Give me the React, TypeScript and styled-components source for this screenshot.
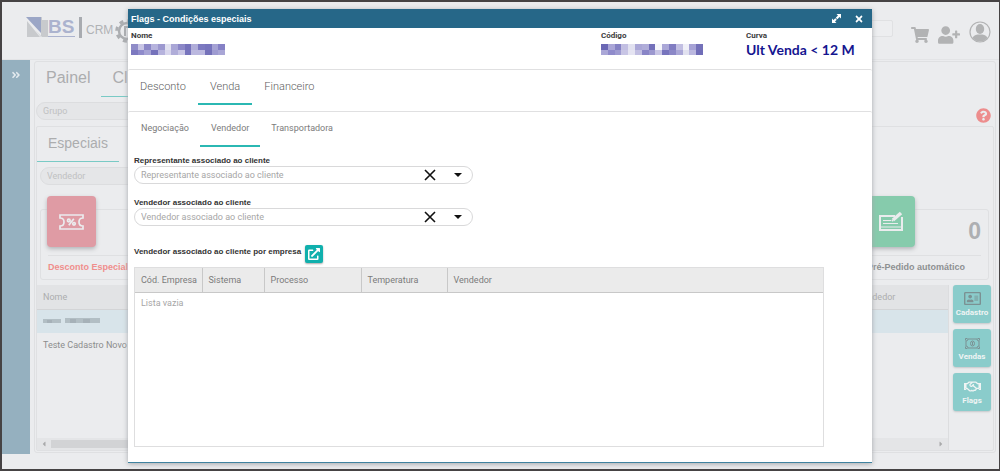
import React, { useState } from 'react';
import styled, { createGlobalStyle } from 'styled-components';
import { FaShoppingCart, FaUserPlus, FaRegAddressCard, FaQuestionCircle, FaRegHandshake } from 'react-icons/fa';
import { FaAngleDoubleRight, FaTimes, FaCaretLeft, FaCaretRight, FaExternalLinkAlt } from 'react-icons/fa';

const arial = '"Liberation Sans", Arial, sans-serif';

const Global = createGlobalStyle`
  * { box-sizing: border-box; }
  html, body, #root { height: 100%; }
  body { margin: 0; background: #ebecee; font-family: Roboto, "Liberation Sans", Arial, sans-serif; font-size: 9px; color: #8b8c8d; overflow: hidden; }
  button, input { font: inherit; color: inherit; margin: 0; }
  button { border: 0; background: none; padding: 0; cursor: pointer; }
  h1, h2, p, dl, dd { margin: 0; font-weight: inherit; }
`;

const Frame = styled.div`
  position: relative;
  height: 100%;
  min-height: 471px;
  display: flex;
  flex-direction: column;
  border: 2px solid #464344;
  border-right-width: 1px;
  overflow: hidden;
`;

const TopBar = styled.header`
  height: 58px;
  flex: none;
  display: flex;
  align-items: center;
  justify-content: space-between;
  padding: 2px 8px 0 24px;
  border-bottom: 1px solid #e3e4e6;
`;
const TopActions = styled.div`
  display: flex;
  align-items: center;
  gap: 9px;
  color: #b2b3b4;
`;
const TopButton = styled.button<{ $low?: boolean }>`
  display: flex;
  padding-top: ${p => (p.$low ? 6 : 0)}px;
`;
const SearchBox = styled.input`
  width: 120px;
  height: 17px;
  margin: 0 9px 6px 0;
  border: 1px solid #e0e1e3;
  border-radius: 2px;
  background: #edeef0;
`;

const Body = styled.div`
  flex: 1;
  min-height: 0;
  display: flex;
  padding-bottom: 15px;
`;
const SideRail = styled.nav`
  width: 28px;
  flex: none;
  display: flex;
  justify-content: center;
  align-items: flex-start;
  padding-top: 10px;
  background: #95b0bf;
  color: #e4ebef;
`;
const Workspace = styled.main`
  flex: 1;
  min-width: 0;
  display: flex;
  flex-direction: column;
  margin: 1px 3px 1px 4px;
  border: 1px solid #dfe0e2;
  border-radius: 3px;
`;
const PageTabs = styled.div`
  display: flex;
  flex: none;
  height: 35px;
`;
const PageTab = styled.button<{ $active?: boolean; $small?: boolean }>`
  padding: 0 11px 2px;
  font-family: ${arial};
  font-size: ${p => (p.$small ? 14 : 16)}px;
  color: #acadae;
  border-bottom: 1px solid ${p => (p.$active ? '#79cac5' : 'transparent')};
`;
const PillInput = styled.input`
  height: 18px;
  padding: 0 6px;
  border: 1px solid #dcdddf;
  border-radius: 9px;
  background: #e5e6e8;
  &::placeholder { color: #c0c1c2; opacity: 1; }
`;
const FilterRow = styled.div`
  display: flex;
  flex: none;
  justify-content: space-between;
  align-items: flex-start;
  height: 29px;
  padding: 5px 4px 0 1px;
`;
const HelpButton = styled.button`
  display: flex;
  margin-top: 6px;
  color: #ed8d8d;
`;
const SubPanel = styled.section`
  flex: 1;
  min-height: 0;
  display: flex;
  flex-direction: column;
  margin: 0 1px 1px;
  border: 1px solid #dfe0e2;
  border-radius: 2px;
`;
const SubFilter = styled.div`
  padding: 5px 0 0 3px;
`;
const Cards = styled.div`
  display: flex;
  justify-content: space-between;
  flex: none;
  padding: 24px 4px 0 3px;
`;
const Card = styled.article<{ $wide?: boolean }>`
  width: ${p => (p.$wide ? 178 : 130)}px;
  height: 71px;
  display: flex;
  flex-direction: column;
  border: 1px solid #dfe0e2;
  border-radius: 3px;
  padding: 0 7px;
`;
const CardTop = styled.div`
  height: 46px;
  flex: none;
  display: flex;
  justify-content: space-between;
  border-bottom: 1px solid #dfe0e2;
  strong { font-family: ${arial}; font-size: 23px; line-height: 42px; color: #adafb2; }
`;
const CardIcon = styled.div<{ $color: string }>`
  width: 49px;
  height: 51px;
  margin: -14px 0 0 -1px;
  display: flex;
  align-items: center;
  justify-content: center;
  border-radius: 4px;
  background: ${p => p.$color};
  color: #ebecee;
  box-shadow: 0 2px 4px #b3b5b8;
`;
const CardName = styled.p<{ $alert?: boolean }>`
  font-family: ${arial};
  font-weight: bold;
  line-height: 22px;
  white-space: nowrap;
  color: ${p => (p.$alert ? '#f08e8c' : '#8e9092')};
`;
const ListArea = styled.div`
  flex: 1;
  min-height: 0;
  display: flex;
  gap: 4px;
  margin-top: 5px;
  padding-right: 2px;
`;
const ClientList = styled.div`
  flex: 1;
  min-width: 0;
  display: flex;
  flex-direction: column;
  justify-content: space-between;
  border-right: 1px solid #dcdddf;
`;
const ClientTable = styled.table`
  width: 100%;
  border-collapse: collapse;
  table-layout: fixed;
  th { height: 24px; padding: 0 6px; background: #e2e3e5; color: #acadae; font-weight: normal; text-align: left; border-bottom: 1px solid #d3d4d6; }
  th:last-child { width: 97px; }
  td { height: 24px; padding: 0 6px; }
`;
const ClientRow = styled.tr<{ $selected?: boolean }>`
  background: ${p => (p.$selected ? '#d8e4ea' : 'transparent')};
`;
const ScrollTrack = styled.div`
  display: flex;
  align-items: center;
  justify-content: space-between;
  height: 12px;
  padding: 0 3px;
  background: #e4e5e7;
  color: #a9aaab;
  span { width: 70%; height: 8px; margin: 0 auto 0 3px; background: #d2d3d5; }
`;
const Shortcuts = styled.div`
  width: 38px;
  display: flex;
  flex-direction: column;
  gap: 6px;
`;
const Shortcut = styled.button`
  height: 38px;
  flex: none;
  display: flex;
  flex-direction: column;
  align-items: center;
  justify-content: flex-end;
  gap: 1px;
  padding-bottom: 5px;
  border-radius: 3px;
  background: #8acccb;
  box-shadow: 0 1px 2px #c4c7c9;
  color: #eff4f4;
  font-size: 8px;
  line-height: 10px;
  font-weight: bold;
`;

const Dialog = styled.div`
  position: absolute;
  z-index: 2;
  top: 7px;
  bottom: 6px;
  left: 126px;
  right: 127px;
  display: flex;
  flex-direction: column;
  background: #fff;
  border-bottom: 1px solid #3f83a0;
  box-shadow: 0 1px 5px #a5a7aa;
`;
const DialogBar = styled.header`
  height: 19px;
  flex: none;
  display: flex;
  align-items: center;
  justify-content: space-between;
  padding: 0 8px 0 3px;
  background: #266788;
  color: #fff;
  h1 { font-family: ${arial}; font-size: 9px; font-weight: bold; }
  div { display: flex; gap: 13px; }
  button { display: flex; }
`;
const Summary = styled.dl`
  flex: none;
  display: grid;
  grid-template-columns: 470fr 145fr 126fr;
  height: 41px;
  padding: 3px 0 0 3px;
  dt { font-size: 8px; line-height: 10px; font-weight: bold; color: #3c3c3c; }
  dd { color: #151590; font-family: Lato, sans-serif; font-weight: bold; font-size: 14px; line-height: 18px; white-space: nowrap; }
`;
const Redacted = styled.svg`
  display: block;
  margin-top: 3px;
`;
const DialogTabs = styled.div<{ $nested?: boolean }>`
  flex: none;
  display: flex;
  height: ${p => (p.$nested ? 36 : 42)}px;
  padding: ${p => (p.$nested ? '0 0 0 2px' : '0 0 6px')};
  border-top: 1px solid #e0e0e1;
  border-radius: 2px;
`;
const DialogTab = styled.button<{ $active?: boolean; $nested?: boolean }>`
  padding: 0 ${p => (p.$nested ? '11px 2px' : '12px')};
  font-weight: ${p => (p.$nested ? 400 : 300)};
  font-size: ${p => (p.$nested ? 9 : 11)}px;
  color: ${p => (p.$nested ? '#7c7c7c' : '#606060')};
  border-bottom: 2px solid ${p => (p.$active ? '#2bb8b3' : 'transparent')};
`;
const Form = styled.div`
  flex: 1;
  display: flex;
  flex-direction: column;
  padding: 9px 48px 15px 6px;
`;
const Field = styled.div`
  margin-bottom: 14px;
  label { display: block; font-family: ${arial}; font-size: 8px; line-height: 10px; font-weight: bold; color: #333; }
`;
const Combo = styled.div`
  display: flex;
  align-items: center;
  width: 339px;
  height: 18px;
  padding: 0 9px 0 6px;
  border: 1px solid #d9d9da;
  border-radius: 9px;
  color: #111;
  input { flex: 1; min-width: 0; border: 0; outline: 0; padding: 0; background: none; }
  input::placeholder { color: #a6a6a6; opacity: 1; }
  button { display: flex; margin-left: 17px; }
`;
const TableHeading = styled.div`
  display: flex;
  align-items: center;
  gap: 4px;
  height: 19px;
  margin: 4px 0 4px;
  h2 { font-family: ${arial}; font-size: 8px; line-height: 10px; margin-bottom: 4px; font-weight: bold; color: #333; }
`;
const OpenButton = styled.button`
  width: 18px;
  height: 18px;
  display: flex;
  align-items: center;
  justify-content: center;
  border-radius: 2px;
  background: #10b0ad;
  color: #fff;
  box-shadow: 0 1px 2px #aaa;
`;
const TableBox = styled.div`
  flex: 1;
  border: 1px solid #dededf;
`;
const SellerTable = styled.table`
  width: 100%;
  border-collapse: collapse;
  table-layout: fixed;
  th { height: 24px; padding: 0 4px 0 6px; background: #ebebeb; color: #7b7b7b; font-weight: normal; text-align: left; white-space: nowrap; border-bottom: 1px solid #c8c8c8; border-right: 1px solid #c8c8c8; }
  th:last-child { border-right: 0; }
  td { height: 22px; padding: 0 6px; color: #a6a6a6; }
`;

const LogoBox = styled.div`
  display: flex;
  height: 36px;
  margin-bottom: 7px;
`;
const Logo = () => (
  <LogoBox>
    <svg width="116" height="36" viewBox="0 0 116 36" role="img" aria-label="NBS CRM">
      <path d="M0 7h15v16z" fill="#9ba6c6" />
      <path d="M1 11v16h13zM16 10h6v17h-6z" fill="#c8cacd" />
      <path d="M9 20l6 7V7h1v20z" fill="#c8cacd" />
      <text x="22" y="23" fontSize="19" fontWeight="bold" fill="#abb3ce" fontFamily="Liberation Sans">BS</text>
      <path d="M22 26.500h27" stroke="#abb3ce" />
      <path d="M54.500 7v21" stroke="#a8abb0" strokeWidth="3" />
      <text x="60" y="24" fontSize="12" fill="#b0b2b5" fontFamily="Liberation Sans">CRM</text>
      <circle cx="101" cy="21" r="8" fill="none" stroke="#acaeb1" strokeWidth="2.500" />
      <circle cx="101" cy="21" r="10.300" fill="none" stroke="#acaeb1" strokeWidth="3" strokeDasharray="4 4.090" />
      <path d="M99 26V17h5" fill="none" stroke="#acaeb1" strokeWidth="2" />
    </svg>
  </LogoBox>
);

const Avatar = () => (
  <svg width="22" height="22" viewBox="0 0 22 22">
    <circle cx="11" cy="11" r="10" fill="none" stroke="currentColor" strokeWidth="1.200" />
    <ellipse cx="11" cy="8" rx="4.200" ry="5" fill="currentColor" />
    <path d="M3.500 17q1-3 5-3.500h5q4 .5 5 3.500-3 3.500-7.500 3.500T3.500 17z" fill="currentColor" />
  </svg>
);

const TicketIcon = () => (
  <svg width="25" height="16" viewBox="0 0 25 16" fill="none" stroke="currentColor" strokeWidth="1.700">
    <path d="M1 1h23v3q-4 0-4 4t4 4v3H1v-3q4 0 4-4T1 4z" />
    <circle cx="9.800" cy="6.500" r="1.300" /><circle cx="15" cy="9.800" r="1.300" /><path d="M14.800 4.800l-5 6.500" />
  </svg>
);

const OrderIcon = () => (
  <svg width="26" height="21" viewBox="0 0 26 21" fill="none" stroke="currentColor">
    <path d="M17 5H2v14h22V6" strokeWidth="2" />
    <path d="M5 9.500h8M5 12.500h15M2 16h22" strokeWidth="1" />
    <path d="M15 9l8-7" strokeWidth="3.500" /><path d="M15 9l-1 1" strokeWidth="2" />
  </svg>
);

const MoneyIcon = () => (
  <svg width="15" height="14" viewBox="0 -1 15 14" fill="none" stroke="#7b9193">
    <path d="M3 1h9q0 2 2 2v5q-2 0-2 2H3q0-2-2-2V3q2 0 2-2z" />
    <path d="M.5 2.500v-2h2M12.500.5h2v2M.5 8.500v2h2M12.500 10.500h2v-2" />
    <ellipse cx="7.500" cy="5.500" rx="2" ry="2.500" /><path d="M7.500 4v3" />
  </svg>
);

const ClearIcon = () => (
  <svg width="12" height="12" viewBox="0 0 12 12" stroke="currentColor" strokeWidth="1.600" fill="none">
    <path d="M1 1l10 10M11 1L1 11" />
  </svg>
);

const Arrow = () => (
  <svg width="10" height="6" viewBox="0 0 10 6" fill="currentColor"><path d="M1 1h8L5 5z" /></svg>
);

const ExpandIcon = () => (
  <svg width="9" height="9" viewBox="0 0 9 9" fill="currentColor">
    <path d="M4.500 0H9v4.500L7.500 3 5.300 5.200 3.800 3.700 6 1.500zM0 4.500L1.500 6l1.800-1.800 1.500 1.500L3 7.500 4.500 9H0z" />
  </svg>
);

const Mosaic = ({ tones, label, width }: { tones: string[][]; label: string; width: number }) => (
  <Redacted width={width} height="11" viewBox={`0 0 ${tones[0].length * 7} 11`} preserveAspectRatio="none" role="img" aria-label={label} shapeRendering="crispEdges">
    {tones.map((row, y) => row.map((c, x) => (
      <rect key={`${x}-${y}`} x={x * 7} y={y === 0 ? 0 : 6} width="7" height={y === 0 ? 6 : 5} fill={c} />
    )))}
  </Redacted>
);

const nameTones = [
  ['#8f8cc8', '#c8c5e5', '#8b87c7', '#b6b3dd', '#9c98cf', '#e1e1f0', '#a9a6d6', '#8b87c7', '#7572bb', '#b0add9', '#7c79c0', '#7774bd', '#a5a2d4', '#8581c5'],
  ['#7c79c0', '#8f8bcb', '#a6a3d5', '#7572bb', '#b6b3dd', '#d8d6ed', '#b0add9', '#c8c5e5', '#7774bd', '#bbb8df', '#bbb8df', '#7471b9', '#9e9bd1', '#a9a6d6'],
];
const codeTones = [
  ['#6a67b4', '#aaa6d7', '#8582c4', '#c2bfe2', '#e1e1f0', '#aaa7d7', '#b0add9', '#7370ba', '#f6f7fb', '#aaa7d7', '#807cc1', '#c2bfe2', '#f0f0f8', '#a6a2d5', '#7471b9'],
  ['#aaa7d7', '#8f8bcb', '#9e9bd1', '#c8c5e5', '#e5e4f2', '#c2bfe2', '#8985c7', '#9c98cf', '#c8c5e5', '#7774bd', '#8b87c7', '#aaa7d7', '#e1e1f0', '#bbb8df', '#706db8'],
];

const Combobox = ({ id, label }: { id: string; label: string }) => {
  const [value, setValue] = useState('');
  return (
    <Field>
      <label htmlFor={id}>{label}</label>
      <Combo>
        <input id={id} placeholder={label} value={value} onChange={e => setValue(e.target.value)} />
        <button aria-label="Limpar" onClick={() => setValue('')}><ClearIcon /></button>
        <button aria-label="Abrir lista"><Arrow /></button>
      </Combo>
    </Field>
  );
};

export default function App() {
  return (
    <>
      <Global />
      <Frame>
        <TopBar>
          <Logo />
          <TopActions>
            <SearchBox aria-label="Pesquisar" />
            <TopButton $low aria-label="Carrinho"><FaShoppingCart size={18} /></TopButton>
            <TopButton $low aria-label="Novo cliente"><FaUserPlus size={22} /></TopButton>
            <TopButton aria-label="Perfil"><Avatar /></TopButton>
          </TopActions>
        </TopBar>
        <Body>
          <SideRail><button aria-label="Expandir menu"><FaAngleDoubleRight size={10} /></button></SideRail>
          <Workspace>
            <PageTabs>
              <PageTab>Painel</PageTab>
              <PageTab $active>Clientes</PageTab>
            </PageTabs>
            <FilterRow>
              <PillInput placeholder="Grupo" aria-label="Grupo" />
              <HelpButton aria-label="Ajuda"><FaQuestionCircle size={15} /></HelpButton>
            </FilterRow>
            <SubPanel>
              <PageTabs><PageTab $active $small>Especiais</PageTab></PageTabs>
              <SubFilter><PillInput placeholder="Vendedor" aria-label="Vendedor" /></SubFilter>
              <Cards>
                <Card $wide>
                  <CardTop><CardIcon $color="#df9ba4"><TicketIcon /></CardIcon></CardTop>
                  <CardName $alert>Desconto Especial</CardName>
                </Card>
                <Card>
                  <CardTop><CardIcon $color="#86cbac"><OrderIcon /></CardIcon><strong>0</strong></CardTop>
                  <CardName>Pré-Pedido automático</CardName>
                </Card>
              </Cards>
              <ListArea>
                <ClientList>
                  <ClientTable>
                    <thead><tr><th>Nome</th><th>Vendedor</th></tr></thead>
                    <tbody>
                      <ClientRow $selected>
                        <td>
                          <svg width="57" height="6" fill="#b2bec4" role="img" aria-label="Nome oculto">
                            <path d="M0 1h18v4H0zM22 0h35v5H22z" /><path d="M4 2h5v3H4zM27 1h6v4h-6zM40 1h7v4h-7z" fill="#a6b1b8" />
                          </svg>
                        </td>
                        <td />
                      </ClientRow>
                      <ClientRow><td>Teste Cadastro Novo</td><td /></ClientRow>
                    </tbody>
                  </ClientTable>
                  <ScrollTrack><FaCaretLeft size={8} /><span /><FaCaretRight size={8} /></ScrollTrack>
                </ClientList>
                <Shortcuts>
                  <Shortcut><FaRegAddressCard size={17} color="#7b9193" />Cadastro</Shortcut>
                  <Shortcut><MoneyIcon />Vendas</Shortcut>
                  <Shortcut><FaRegHandshake size={17} />Flags</Shortcut>
                </Shortcuts>
              </ListArea>
            </SubPanel>
          </Workspace>
        </Body>

        <Dialog role="dialog" aria-labelledby="dialog-title">
          <DialogBar>
            <h1 id="dialog-title">Flags - Condições especiais</h1>
            <div>
              <button aria-label="Maximizar"><ExpandIcon /></button>
              <button aria-label="Fechar"><FaTimes size={10} /></button>
            </div>
          </DialogBar>
          <Summary>
            <div><dt>Nome</dt><dd><Mosaic tones={nameTones} width={94} label="Nome oculto" /></dd></div>
            <div><dt>Código</dt><dd><Mosaic tones={codeTones} width={102} label="Código oculto" /></dd></div>
            <div><dt>Curva</dt><dd>Ult Venda &lt; 12 M</dd></div>
          </Summary>
          <DialogTabs>
            <DialogTab>Desconto</DialogTab>
            <DialogTab $active>Venda</DialogTab>
            <DialogTab>Financeiro</DialogTab>
          </DialogTabs>
          <DialogTabs $nested>
            <DialogTab $nested>Negociação</DialogTab>
            <DialogTab $nested $active>Vendedor</DialogTab>
            <DialogTab $nested>Transportadora</DialogTab>
          </DialogTabs>
          <Form>
            <Combobox id="representante" label="Representante associado ao cliente" />
            <Combobox id="vendedor" label="Vendedor associado ao cliente" />
            <TableHeading>
              <h2>Vendedor associado ao cliente por empresa</h2>
              <OpenButton aria-label="Abrir vendedores por empresa"><FaExternalLinkAlt size={12} /></OpenButton>
            </TableHeading>
            <TableBox>
              <SellerTable>
                <colgroup><col width="67" /><col width="62" /><col width="97" /><col width="86" /><col /></colgroup>
                <thead><tr><th>Cód. Empresa</th><th>Sistema</th><th>Processo</th><th>Temperatura</th><th>Vendedor</th></tr></thead>
                <tbody><tr><td colSpan={5}>Lista vazia</td></tr></tbody>
              </SellerTable>
            </TableBox>
          </Form>
        </Dialog>
      </Frame>
    </>
  );
}
